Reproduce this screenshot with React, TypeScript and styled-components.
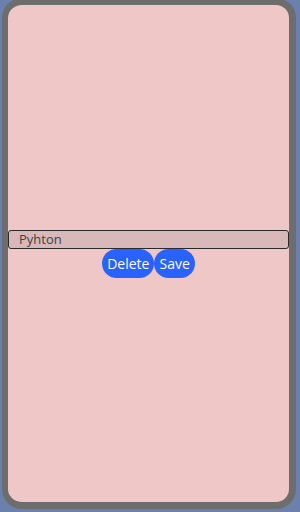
import React, { useState } from 'react';
import styled, { createGlobalStyle } from 'styled-components';

const GlobalStyle = createGlobalStyle`
    html, body {
        margin: 0;
        padding: 0;
        background: #6c80ad;
    }
    body {
        font-family: "Open Sans", "Noto Sans", sans-serif;
    }
`;

const App = () => {
    const [text, setText] = useState('Pyhton');

    return (
        <>
            <GlobalStyle />
            <Page>
                <Frame>
                    <Editor>
                        <TextInput value={text} onChange={(event) => setText(event.target.value)} />
                        <Actions>
                            <ActionButton type="button">Delete</ActionButton>
                            <ActionButton type="button">Save</ActionButton>
                        </Actions>
                    </Editor>
                </Frame>
            </Page>
        </>
    );
};

const Page = styled.div`
    width: 300px;
    height: 512px;
    padding: 0 4px 3px 2px;
    box-sizing: border-box;
    overflow: hidden;
`;

const Frame = styled.div`
    margin-top: -2px;
    height: 511px;
    box-sizing: border-box;
    border: 7px solid #6d6d6d;
    border-left-width: 6px;
    border-radius: 20px;
    background: #efc7c6;
    display: flex;
    flex-direction: column;
    justify-content: center;
`;

const Editor = styled.div`
    display: flex;
    flex-direction: column;
    align-items: center;
`;

const TextInput = styled.input`
    width: 100%;
    height: 19px;
    box-sizing: border-box;
    border: 1px solid #2a2a2a;
    border-radius: 3px;
    background: #d8b8b8;
    padding: 0 10px;
    font-family: "Open Sans", "Noto Sans", sans-serif;
    font-size: 13px;
    color: #4a4040;
    outline: none;
`;

const Actions = styled.div`
    display: flex;
`;

const ActionButton = styled.button`
    height: 29px;
    padding: 0 5px;
    border: none;
    border-radius: 15px;
    background: #2962ff;
    color: #fff;
    font-family: "Open Sans", "Noto Sans", sans-serif;
    font-size: 14px;
    font-weight: 500;
    cursor: pointer;
`;

export default App;
